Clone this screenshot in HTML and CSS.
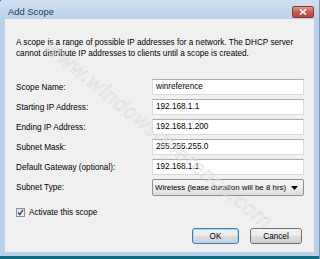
FILE: index.html
```html
<!DOCTYPE html>
<html lang="en">
<head>
    <meta charset="UTF-8">
    <title>Add Scope</title>
    <link rel="stylesheet" href="styles.css">
</head>
<body>
    <div class="window">
        <div class="titlebar">
            <span class="title">Add Scope</span>
            <span class="close-btn">
                <svg width="8" height="6" viewBox="0 0 8 6"><path d="M1 0.5 L7 5.5 M7 0.5 L1 5.5" stroke="#fff" stroke-width="1.6"/></svg>
            </span>
        </div>

        <div class="client">
            <p class="intro">A scope is a range of possible IP addresses for a network. The DHCP server cannot distribute IP addresses to clients until a scope is created.</p>

            <div class="form-grid">
                <label>Scope Name:</label>
                <div class="field">winreference</div>

                <label>Starting IP Address:</label>
                <div class="field">192.168.1.1</div>

                <label>Ending IP Address:</label>
                <div class="field">192.168.1.200</div>

                <label>Subnet Mask:</label>
                <div class="field">255.255.255.0</div>

                <label>Default Gateway (optional):</label>
                <div class="field">192.168.1.1</div>

                <label>Subnet Type:</label>
                <div class="combo">
                    <span>Wireless (lease duration will be 8 hrs)</span>
                    <svg width="7" height="4" viewBox="0 0 7 4"><path d="M0 0 H7 L3.5 4 Z" fill="#000"/></svg>
                </div>
            </div>

            <div class="check-row">
                <span class="checkbox">
                    <svg width="9" height="9" viewBox="0 0 9 9"><path d="M2 4.5 L3.8 6.5 L7 1.8" stroke="#2b4d8c" stroke-width="1.4" fill="none"/></svg>
                </span>
                <span>Activate this scope</span>
            </div>

            <div class="buttons">
                <span class="btn btn-default">OK</span>
                <span class="btn btn-cancel">Cancel</span>
            </div>

            <!-- site watermark over the dialog -->
            <div class="watermark">www.windowsreference.com</div>
        </div>
        <div class="desktop-edge"></div>
    </div>
</body>
</html>
```

FILE: styles.css
```css
body {
    margin: 0;
    background: #0e6f80;
    font-family: "Liberation Sans", Arial, sans-serif;
    font-size: 8.2px;
    color: #000;
}

.window {
    width: 320px;
    height: 259px;
    display: flex;
    flex-direction: column;
    background: #b9d1ea;
    box-sizing: border-box;
    border-right: 1px solid #7d95b2;
    border-top-left-radius: 3px;
    overflow: hidden;
}

.titlebar {
    height: 19px;
    flex: none;
    display: flex;
    align-items: center;
    justify-content: space-between;
    padding: 0 5px 0 8px;
    background: linear-gradient(#d0e0f1, #b9d1ea);
}

.title {
    font-size: 9.4px;
    color: #1e395b;
    margin-top: 3px;
}

.close-btn {
    width: 20px;
    height: 10px;
    display: flex;
    align-items: center;
    justify-content: center;
    border: 1px solid #8d3a34;
    border-radius: 2px;
    background: linear-gradient(#e3978f, #c75b50 50%, #b8463b);
    margin-top: 5px;
}

.client {
    position: relative;
    flex: 1;
    margin: 0 5px 0 5px;
    background: #f0f0f0;
    padding: 18px 10px 0 11px;
    overflow: hidden;
}

.desktop-edge {
    height: 3px;
    margin-top: 4px;
    background: #0e6f80;
    flex: none;
}

.intro {
    margin: 0;
    line-height: 11px;
    width: 290px;
}

.form-grid {
    display: grid;
    grid-template-columns: 136px 1fr;
    row-gap: 4px;
    margin-top: 20px;
    align-items: center;
}

.field {
    height: 16px;
    box-sizing: border-box;
    background: #fff;
    border: 1px solid #d5dbe3;
    border-top-color: #abadb3;
    padding: 0 3px;
    line-height: 14px;
}

.combo {
    height: 17px;
    box-sizing: border-box;
    border: 1px solid #8e8f8f;
    border-radius: 2px;
    background: linear-gradient(#f8f8f8, #ececec 50%, #dddddd);
    display: flex;
    align-items: center;
    justify-content: space-between;
    padding: 0 5px 0 2px;
    white-space: nowrap;
    font-size: 7.9px;
}

.check-row {
    display: flex;
    align-items: center;
    gap: 4px;
    margin-top: 12px;
    margin-left: 0;
}

.checkbox {
    width: 9px;
    height: 9px;
    box-sizing: border-box;
    border: 1px solid #8e8f8f;
    background: linear-gradient(#e4e4e4, #fbfbfb);
    display: flex;
}

.checkbox svg {
    margin: -1px;
}

.buttons {
    display: flex;
    justify-content: flex-end;
    gap: 11px;
    margin-top: 11px;
    padding-right: 2px;
}

.btn {
    height: 16px;
    box-sizing: border-box;
    display: flex;
    align-items: center;
    justify-content: center;
    border: 1px solid #707070;
    border-radius: 3px;
    background: linear-gradient(#f2f2f2, #ebebeb 50%, #dddddd 51%, #cfcfcf);
}

.btn-default {
    width: 47px;
    border-color: #3c7fb1;
    box-shadow: inset 0 0 0 1px #a7d9f5;
}

.btn-cancel {
    width: 52px;
}

.watermark {
    position: absolute;
    left: 50px;
    top: 16px;
    font-family: "DejaVu Sans", sans-serif;
    font-size: 20px;
    font-style: italic;
    white-space: nowrap;
    color: rgba(245, 245, 245, 0.5);
    -webkit-text-stroke: 0.6px rgba(150, 150, 150, 0.3);
    transform: rotate(39deg);
    transform-origin: 0 0;
    pointer-events: none;
}
```
